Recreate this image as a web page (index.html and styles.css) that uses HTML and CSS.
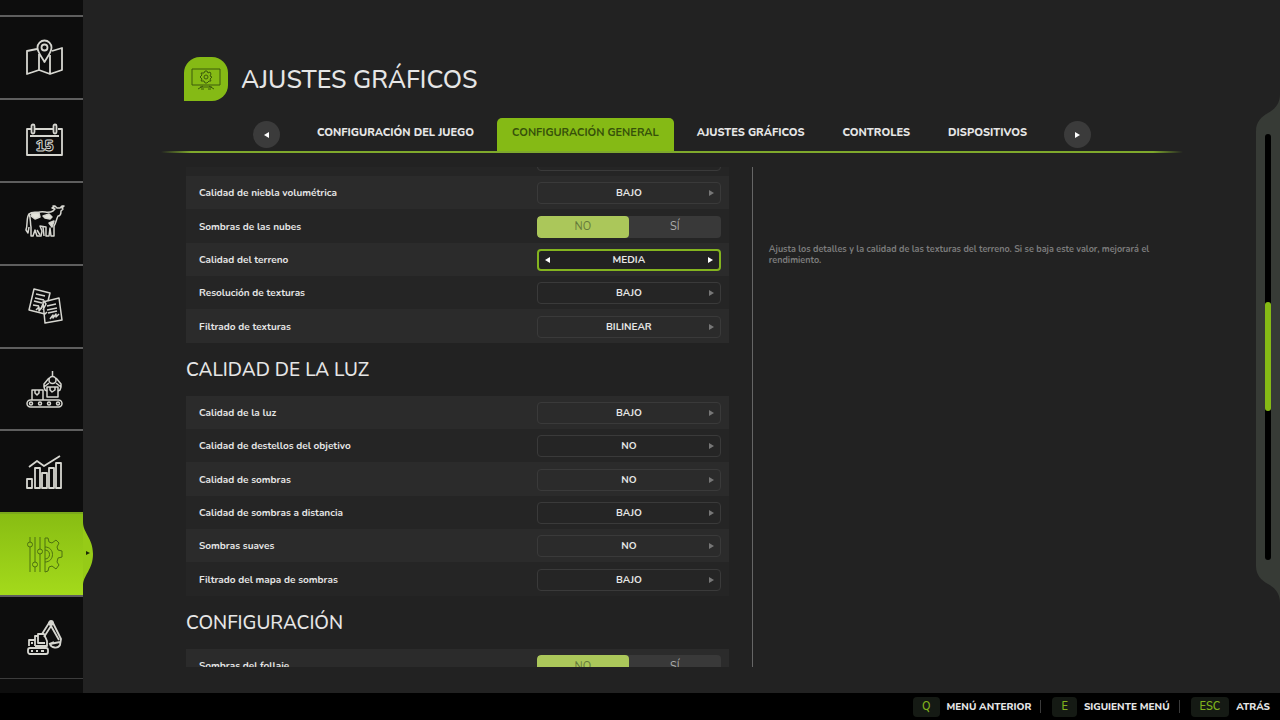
FILE: index.html
```html
<!DOCTYPE html>
<html lang="es">
<head>
  <meta charset="UTF-8">
  <meta name="viewport" content="width=device-width, initial-scale=1.0">
  <title>Ajustes gráficos</title>
  <link rel="stylesheet" href="styles.css">
</head>
<body>
  <div class="screen">
    <nav class="sidebar">
      <button class="side-item" aria-label="Mapa">
        <svg class="side-icon" viewBox="0 0 40 40">
          <path d="M12 12 L2 14 V37 L14 33 L25 37 L37 33 V11 L27 14 M14 17 V33 M25 18 V37"/>
          <path d="M19.500 25 C16 19 12.500 15 12.500 10.500 A7 7 0 0 1 26.500 10.500 C26.500 15 23 19 19.500 25 Z"/>
          <circle cx="19.500" cy="10.500" r="3"/>
        </svg>
      </button>
      <button class="side-item" aria-label="Calendario">
        <svg class="side-icon" viewBox="0 0 40 40">
          <path d="M6 9 H2 V35 H37 V9 H33 M10 9 H28 M5 16 H34"/>
          <rect x="6.500" y="4.500" width="3" height="9" rx="1.500"/>
          <rect x="28.500" y="4.500" width="3" height="9" rx="1.500"/>
          <text class="day" x="19.500" y="31" text-anchor="middle">15</text>
        </svg>
      </button>
      <button class="side-item" aria-label="Animales">
        <svg class="side-icon thin" viewBox="0 0 40 40">
          <path d="M4 11 C7 8 11 10 15 9 C20 8 23 11 28 8 L30 6 L27 5 L29 4 L28 3 H30 L32 5 H35 L37 3 H39 L37 5 L38 6 L36 8 C36 11 35 13 33 13 C31 17 31 20 29 23 V33 H26 L25 25 L24 33 H21 L21 24 L15 23 L17 28 L16 33 H12 L10 27 L8 33 H6 V24 C5 20 6 15 4 11 Z"/>
          <path d="M4 11 C1 15 3 21 1 27 L3 30 L4 24 M18 24 L19 33 M12 27 L15 32"/>
          <path class="solid" d="M7 10 L14 10 L15 14 L10 16 L6 13 Z M18 13 L24 11 L27 14 L25 16 L20 15 Z M24 20 L29 18 L27 24 Z"/>
        </svg>
      </button>
      <button class="side-item" aria-label="Contratos">
        <svg class="side-icon thin" viewBox="0 0 40 40">
          <path d="M22 26 L20 28 L4 24 L9 3 L25 7 L23 15"/>
          <path d="M11 8 L20 10 M10 12 L19 14 M9 15 L17 17 M8 19 L14 20 M11 24 L14 21 L14 25 L17 21"/>
          <path d="M18 16 L34 12 L37 34 L20 37 Z M16 23 L19 15 L21 18 L18 24"/>
          <path d="M22 20 L31 18 M22 24 L32 22 M23 27 L32 25 M25 33 L28 29 L28 32 L31 28 L31 31 L34 28"/>
        </svg>
      </button>
      <button class="side-item" aria-label="Producción">
        <svg class="side-icon thin" viewBox="0 0 40 40">
          <rect x="2" y="31" width="35" height="7" rx="3.500"/>
          <circle cx="6" cy="34.500" r="1.500"/><circle cx="15" cy="34.500" r="1.500"/>
          <circle cx="24" cy="34.500" r="1.500"/><circle cx="33" cy="34.500" r="1.500"/>
          <path d="M7 31 V21 H18 V31 M10 21 V24 L12 26 L14 24 V21 M22 28 V18 H33 V28 Z M25 18 V21 L27 23 L30 21 V18"/>
          <path d="M27.500 8 V2 M24 14 L19 18 L20 21 L22 22 M31 14 L36 18 L35 21 L33 22 M24 9 L19 15 V18 M31 9 L36 15 V18"/>
          <circle cx="27.500" cy="11" r="3.500"/>
        </svg>
      </button>
      <button class="side-item" aria-label="Estadísticas">
        <svg class="side-icon" viewBox="0 0 40 40">
          <path d="M2 27 H7 V36 H2 Z M10 16 H15 V36 H10 Z M17 21 H22 V36 H17 Z M24 16 H29 V36 H24 Z M31 11 H36 V36 H31 Z"/>
          <path d="M4 15 L12 9 L19 14 L35 4"/>
        </svg>
      </button>
      <button class="side-item active" aria-label="Ajustes">
        <svg class="side-icon" viewBox="0 0 40 40">
          <path d="M5 2 V7 M5 12 V37 M10 2 V27 M10 32 V37 M15 2 V14 M15 19 V37"/>
          <circle cx="5" cy="9.500" r="2.500"/><circle cx="10" cy="29.500" r="2.500"/><circle cx="15" cy="16.500" r="2.500"/>
          <path d="M20 37 V3 L23 3 L24 7 L27 8 L31 5 L34 8 L32 12 L33 15 L37 16 V22 L33 23 L32 27 L34 30 L31 34 L27 31 L24 32 L23 36 Z M20 12 C30 12 30 27 20 27 M20 15 C26 15 26 24 20 24"/>
        </svg>
        <svg class="bump" viewBox="0 0 10 64">
          <path d="M0 0 C0 11 10 16 10 32 C10 48 0 53 0 64 Z"/>
          <path class="bump-arrow" d="M3 29 L7 31 L3 33 Z"/>
        </svg>
      </button>
      <button class="side-item" aria-label="Construcción">
        <svg class="side-icon" viewBox="0 0 40 40">
          <rect x="3" y="30" width="20" height="6" rx="2"/>
          <path d="M6 33 H8 M11 33 H13 M16 33 H19 M4 28 V22 H10 M10 28 V18 H13 M10 28 H22 V23 L19 16 H13 V25 H20 M6 25 H8"/>
          <path d="M17 16 L24 5 L28 5 L36 21 L35 27 C33 31 26 30 25 26 L35 24 M19 19 L26 8 L34 22 M24 26 L29 24"/>
          <circle cx="26" cy="5" r="2"/>
        </svg>
      </button>
    </nav>

    <main class="content">
      <header class="page-header">
        <div class="badge">
          <svg class="badge-icon" viewBox="0 0 30 24">
            <path d="M1 2 H29 V18 H1 Z M9 20 L21 20 M12 19 L7 22 M18 19 L23 22 M10 22 H13 M17 22 H20"/>
            <circle cx="15" cy="10" r="2"/>
            <path d="M14 4 H16 L17 6 L19 5 L20 7 L19 9 L21 10 L19 12 L20 14 L18 14 L16 16 H14 L13 14 L10 14 L11 12 L9 10 L11 8 L10 6 L13 6 Z"/>
          </svg>
        </div>
        <h1>AJUSTES GRÁFICOS</h1>
      </header>

      <nav class="tabs">
        <button class="tab-arrow" aria-label="Pestaña anterior"><span class="arrow left"></span></button>
        <div class="tab-list">
          <button class="tab">CONFIGURACIÓN DEL JUEGO</button>
          <button class="tab selected">CONFIGURACIÓN GENERAL</button>
          <button class="tab">AJUSTES GRÁFICOS</button>
          <button class="tab">CONTROLES</button>
          <button class="tab">DISPOSITIVOS</button>
        </div>
        <button class="tab-arrow" aria-label="Pestaña siguiente"><span class="arrow right"></span></button>
      </nav>

      <div class="panels">
        <section class="settings">
          <div class="group scrolled">
            <div class="row">
              <span class="label"></span>
              <div class="stepper"><span class="value"></span></div>
            </div>
            <div class="row">
              <span class="label">Calidad de niebla volumétrica</span>
              <div class="stepper"><span class="value">BAJO</span><button class="step" aria-label="Siguiente"><span class="arrow right"></span></button></div>
            </div>
            <div class="row">
              <span class="label">Sombras de las nubes</span>
              <div class="toggle"><button class="option on">NO</button><button class="option">SÍ</button></div>
            </div>
            <div class="row">
              <span class="label">Calidad del terreno</span>
              <div class="stepper focused"><button class="step prev" aria-label="Anterior"><span class="arrow left"></span></button><span class="value">MEDIA</span><button class="step" aria-label="Siguiente"><span class="arrow right"></span></button></div>
            </div>
            <div class="row">
              <span class="label">Resolución de texturas</span>
              <div class="stepper"><span class="value">BAJO</span><button class="step" aria-label="Siguiente"><span class="arrow right"></span></button></div>
            </div>
            <div class="row">
              <span class="label">Filtrado de texturas</span>
              <div class="stepper"><span class="value">BILINEAR</span><button class="step" aria-label="Siguiente"><span class="arrow right"></span></button></div>
            </div>
          </div>

          <h2>CALIDAD DE LA LUZ</h2>
          <div class="group">
            <div class="row">
              <span class="label">Calidad de la luz</span>
              <div class="stepper"><span class="value">BAJO</span><button class="step" aria-label="Siguiente"><span class="arrow right"></span></button></div>
            </div>
            <div class="row">
              <span class="label">Calidad de destellos del objetivo</span>
              <div class="stepper"><span class="value">NO</span><button class="step" aria-label="Siguiente"><span class="arrow right"></span></button></div>
            </div>
            <div class="row">
              <span class="label">Calidad de sombras</span>
              <div class="stepper"><span class="value">NO</span><button class="step" aria-label="Siguiente"><span class="arrow right"></span></button></div>
            </div>
            <div class="row">
              <span class="label">Calidad de sombras a distancia</span>
              <div class="stepper"><span class="value">BAJO</span><button class="step" aria-label="Siguiente"><span class="arrow right"></span></button></div>
            </div>
            <div class="row">
              <span class="label">Sombras suaves</span>
              <div class="stepper"><span class="value">NO</span><button class="step" aria-label="Siguiente"><span class="arrow right"></span></button></div>
            </div>
            <div class="row">
              <span class="label">Filtrado del mapa de sombras</span>
              <div class="stepper"><span class="value">BAJO</span><button class="step" aria-label="Siguiente"><span class="arrow right"></span></button></div>
            </div>
          </div>

          <h2>CONFIGURACIÓN</h2>
          <div class="group">
            <div class="row">
              <span class="label">Sombras del follaje</span>
              <div class="toggle"><button class="option on">NO</button><button class="option">SÍ</button></div>
            </div>
          </div>
        </section>

        <aside class="help">
          <p>Ajusta los detalles y la calidad de las texturas del terreno. Si se baja este valor, mejorará el rendimiento.</p>
        </aside>
      </div>
    </main>

    <div class="scrollbar">
      <svg class="cap" viewBox="0 0 24 37"><path d="M24 0 C24 10 19 15 12 19 C5 23 0 28 0 37 H24 Z"/></svg>
      <div class="rail">
        <div class="track"><div class="thumb"></div></div>
      </div>
      <svg class="cap" viewBox="0 0 24 37"><path d="M24 37 C24 27 19 22 12 18 C5 14 0 9 0 0 H24 Z"/></svg>
    </div>
  </div>

  <footer class="hints">
    <button class="hint"><kbd>Q</kbd>MENÚ ANTERIOR</button>
    <button class="hint"><kbd>E</kbd>SIGUIENTE MENÚ</button>
    <button class="hint"><kbd>ESC</kbd>ATRÁS</button>
  </footer>
</body>
</html>
```
FILE: styles.css
```css
* {
  box-sizing: border-box;
}
body {
  margin: 0;
  height: 100vh;
  display: flex;
  flex-direction: column;
  overflow: hidden;
  background-color: #222;
  color: #e6e6e6;
  font-family: Nunito, Lato, sans-serif;
}
button {
  margin: 0;
  padding: 0;
  border: none;
  background: none;
  color: inherit;
  font: inherit;
  cursor: pointer;
}
.screen {
  flex: 1;
  min-height: 0;
  display: flex;
}

/* left menu */
.sidebar {
  width: 83px;
  display: flex;
  flex-direction: column;
  padding: 15px 0 14px;
  background-color: #0d0d0d;
}
.side-item {
  position: relative;
  flex: 1;
  display: flex;
  align-items: center;
  justify-content: center;
  padding-left: 7px;
  border-top: 2px solid #5e5e5e;
}
.side-item:last-child {
  border-bottom: 1px solid #3c3c3c;
}
.side-icon {
  width: 40px;
  height: 40px;
  fill: none;
  stroke: #d6d6d0;
  stroke-width: 1.8;
  stroke-linejoin: round;
}
.side-icon.thin {
  stroke-width: 1.5;
}
.side-icon .solid {
  fill: #e4e4dc;
}
.day {
  font-size: 15px;
  font-weight: 900;
  stroke-width: 1;
}
.side-item.active {
  border-top-color: #7aa81c;
  background: linear-gradient(#88bd13, #a4da1b);
}
.active .side-icon {
  stroke: #4c7010;
  stroke-width: 1;
}
.bump {
  position: absolute;
  left: 100%;
  top: 8px;
  width: 10px;
  height: 64px;
  fill: #96cb17;
}
.bump-arrow {
  fill: #1c2a08;
}

/* main area */
.content {
  flex: 1;
  min-width: 0;
  display: flex;
  flex-direction: column;
  padding: 57px 73px 26px 78px;
}
.page-header {
  display: flex;
  align-items: center;
  gap: 13px;
  padding-left: 23px;
}
.badge {
  width: 44px;
  height: 44px;
  display: flex;
  align-items: center;
  justify-content: center;
  border-radius: 16px 16px 16px 0;
  background-color: #85ba15;
}
.badge-icon {
  width: 30px;
  height: 24px;
  fill: none;
  stroke: #3c5a0c;
}
h1 {
  margin: 0;
  padding-top: 2px;
  font-size: 25px;
  font-weight: 500;
  line-height: 42px;
}
.tabs {
  display: flex;
  align-items: center;
  justify-content: center;
  gap: 22px;
  margin-top: 17px;
  padding-bottom: 2px;
  background: linear-gradient(90deg, transparent, #7fa92c 30px, #7fa92c calc(100% - 30px), transparent) bottom / 100% 2px no-repeat;
}
.tab-list {
  display: flex;
  gap: 8px;
}
.tab {
  height: 33px;
  padding: 0 15px 5px;
  border-radius: 5px 5px 0 0;
  font-size: 11px;
  font-weight: 800;
  white-space: nowrap;
}
.tab.selected {
  background-color: #85ba15;
  color: #36510a;
  font-weight: 700;
}
.tab-arrow {
  width: 27px;
  height: 27px;
  display: flex;
  align-items: center;
  justify-content: center;
  border-radius: 50%;
  background-color: #3b3b3b;
}
.arrow {
  display: block;
  border: 3px solid transparent;
}
.arrow.left {
  border-right: 5px solid #fff;
  border-left: none;
}
.arrow.right {
  border-left: 5px solid #fff;
  border-right: none;
}
.panels {
  flex: 1;
  min-height: 0;
  display: grid;
  grid-template-columns: 21fr 16fr;
  margin-top: 14px;
  padding-left: 25px;
}

/* settings list */
.settings {
  overflow: hidden;
  padding-right: 23px;
}
.scrolled {
  margin-top: -24px;
}
h2 {
  margin: 0;
  padding-top: 2px;
  font-size: 19px;
  font-weight: 500;
  line-height: 51px;
}
.row {
  height: 33px;
  display: flex;
  align-items: center;
  justify-content: space-between;
  padding: 1px 8px 0 13px;
  background-color: #252525;
}
.row:nth-child(3n) {
  height: 34px;
}
.scrolled .row:nth-child(even),
.group:not(.scrolled) .row:nth-child(odd) {
  background-color: #2b2b2b;
}
.label {
  font-size: 10px;
  font-weight: 700;
}
.stepper,
.toggle {
  position: relative;
  width: 184px;
  height: 22px;
  display: flex;
  align-items: center;
  border-radius: 4px;
  font-size: 10px;
}
.stepper {
  border: 1px solid #3a3a3a;
}
.stepper.focused {
  border: 2px solid #84b41f;
  background-color: #222;
}
.value {
  flex: 1;
  text-align: center;
  font-weight: 700;
}
.step {
  position: absolute;
  right: 6px;
}
.step.prev {
  right: auto;
  left: 6px;
}
.stepper:not(.focused) .arrow {
  border-left-color: #777;
}
.toggle {
  overflow: hidden;
  background-color: #393939;
}
.option {
  flex: 1;
  height: 100%;
  color: #aaa;
  font-size: 11px;
}
.option.on {
  border-radius: 4px;
  background-color: #abc75a;
  color: #65793a;
}
.help {
  padding: 77px 24px 0 16px;
  border-left: 1px solid #666;
}
.help p {
  margin: 0;
  color: #7c7c7c;
  font-size: 9px;
  font-weight: 700;
  line-height: 11px;
}

/* scrollbar */
.scrollbar {
  width: 24px;
  display: flex;
  flex-direction: column;
  padding: 94px 0 90px;
}
.cap {
  display: block;
  width: 24px;
  height: 37px;
  fill: #373b36;
}
.rail {
  flex: 1;
  padding: 3px 9px 6px;
  background-color: #373b36;
}
.track {
  width: 6px;
  height: 100%;
  padding-top: 168px;
  border-radius: 3px;
  background-color: #000;
}
.thumb {
  height: 109px;
  border-radius: 3px;
  background-color: #85ba15;
}

/* bottom bar */
.hints {
  height: 27px;
  display: flex;
  align-items: center;
  justify-content: flex-end;
  padding-right: 10px;
  background-color: #000;
}
.hint {
  display: flex;
  align-items: center;
  gap: 7px;
  font-size: 10px;
  font-weight: 800;
}
.hint + .hint::before {
  content: "";
  width: 1px;
  height: 13px;
  margin: 0 4px 0 9px;
  background-color: #3a3a3a;
}
kbd {
  padding: 0 9px;
  border-radius: 4px;
  background-color: #151a14;
  color: #7fb01c;
  font-family: inherit;
  font-size: 11px;
  font-weight: 600;
  line-height: 20px;
}
```
